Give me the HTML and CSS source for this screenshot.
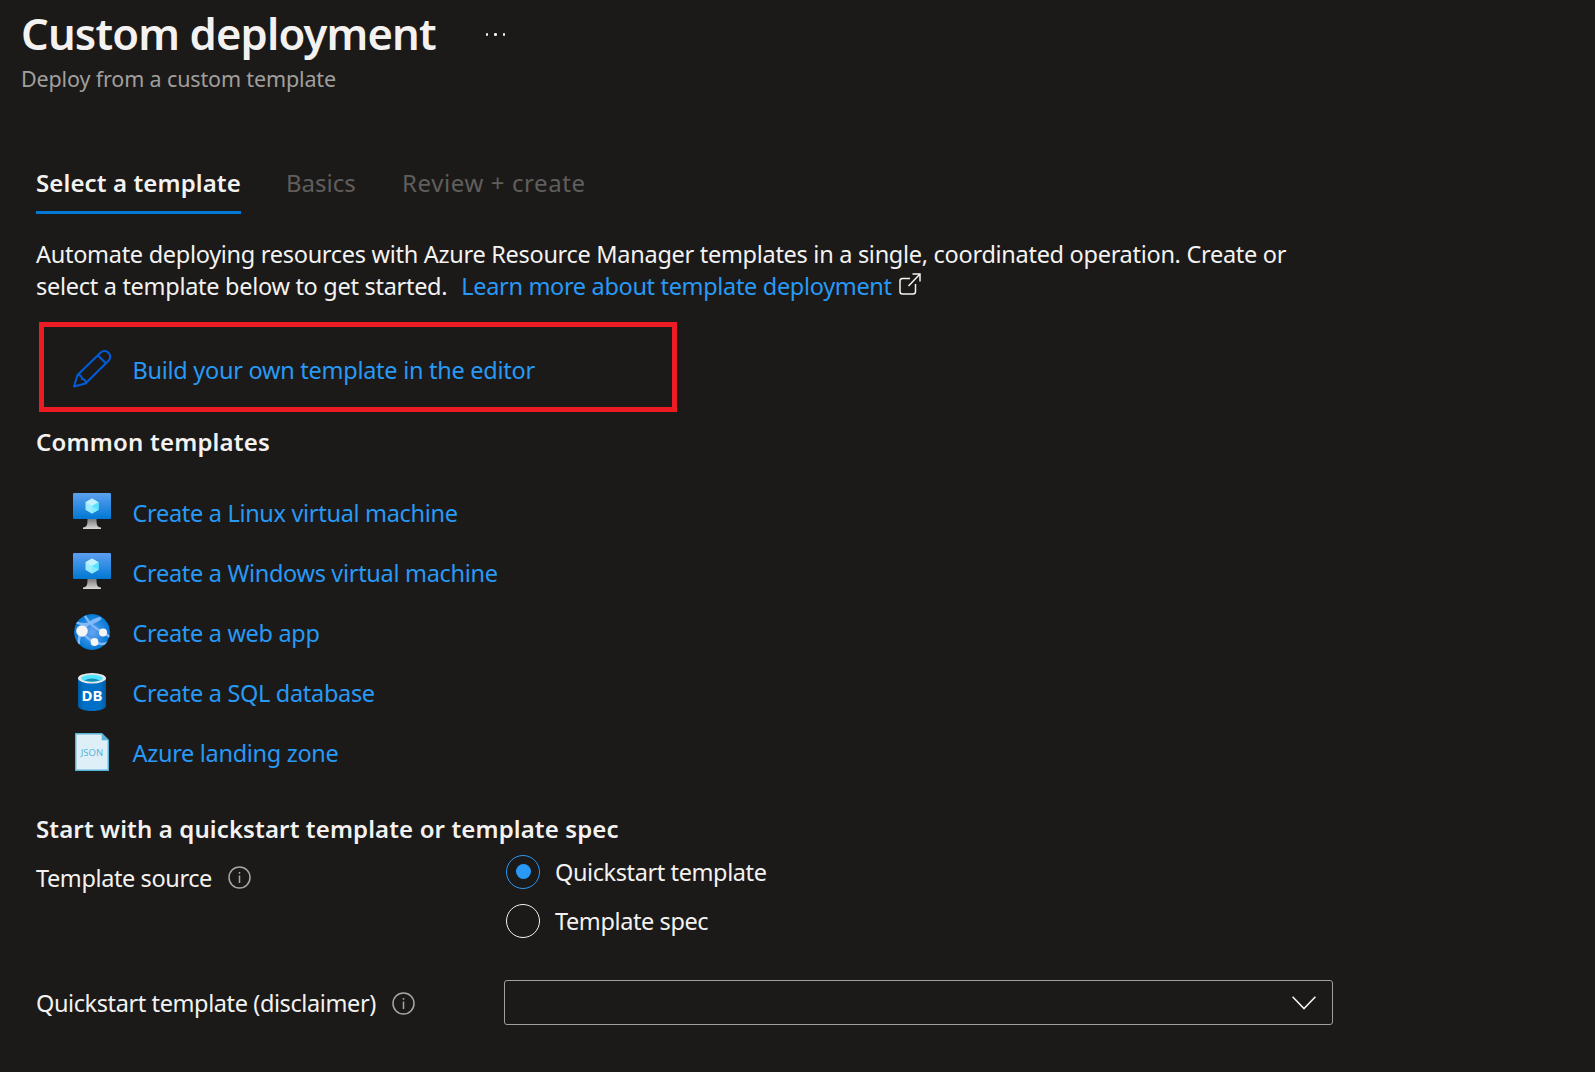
FILE: index.html
```html
<!DOCTYPE html>
<html lang="en">
<head>
<meta charset="utf-8">
<title>Custom deployment</title>
<link rel="stylesheet" href="styles.css">
</head>
<body>
<svg class="defs" aria-hidden="true">
  <defs>
    <linearGradient id="screen" x1="0" y1="0" x2="0" y2="1"><stop offset="0" stop-color="#5ea0ef"/><stop offset="1" stop-color="#0078d4"/></linearGradient>
    <linearGradient id="stand" x1="0" y1="0" x2="0" y2="1"><stop offset="0" stop-color="#7a7a7a"/><stop offset="1" stop-color="#d8d8d8"/></linearGradient>
    <radialGradient id="globe"><stop offset="0.1" stop-color="#5ea0ef"/><stop offset="1" stop-color="#0078d4"/></radialGradient>
    <linearGradient id="drum" x1="0" y1="0" x2="1" y2="0"><stop offset="0" stop-color="#005ba1"/><stop offset="0.2" stop-color="#0070c6"/><stop offset="0.8" stop-color="#0070c6"/><stop offset="1" stop-color="#005ba1"/></linearGradient>
    <clipPath id="globe-clip"><circle cx="19" cy="19" r="18"/></clipPath>
    <symbol id="vm" viewBox="0 0 38 38">
      <path d="M14.500 26h9c0 6 .5 8 4.500 8.500v1.500h-18v-1.500c4-.5 4.500-2.500 4.500-8.500z" fill="url(#stand)"/>
      <rect width="38" height="26" rx="1.200" fill="url(#screen)"/>
      <path d="M19 5.500l6.500 3.700v7.500L19 20.500l-6.500-3.800V9.200z" fill="#9cebff"/>
      <path d="M19 5.500l6.500 3.700L19 13l-6.500-3.800z" fill="#c3f1ff"/>
      <path d="M19 13l6.500-3.800v7.500L19 20.500z" fill="#50e6ff"/>
      <path d="M12.500 16.700L19 13l6.500 3.700-6.500 3.800z" fill="#9cebff" opacity=".7"/>
    </symbol>
  </defs>
</svg>

<header class="header">
  <div class="title-row">
    <h1 class="title">Custom deployment</h1>
    <span class="more"><i></i><i></i><i></i></span>
  </div>
  <p class="subtitle">Deploy from a custom template</p>
</header>

<main class="content">
  <nav class="tabs">
    <span class="tab tab-active">Select a template</span>
    <span class="tab tab-basics">Basics</span>
    <span class="tab tab-review">Review + create</span>
  </nav>

  <p class="intro">Automate deploying resources with Azure Resource Manager templates in a single, coordinated operation. Create or<br>select a template below to get started.<a class="learn">Learn more about template deployment</a><svg class="external" viewBox="0 0 22 22" fill="none" stroke="#f3f2f1" stroke-width="1.500"><path d="M11 5.500H3.500Q1 5.500 1 8v10.500Q1 21 3.500 21H14q2.500 0 2.500-2.500V11M13.500 1H21v7.500M21 1L9.500 13"/></svg></p>

  <div class="build">
    <svg class="pencil" viewBox="0 0 38 38" fill="none" stroke="#015cda" stroke-width="2" stroke-linejoin="round"><path d="M1 36.500l3.500-11.500L27.500 2.700a5.600 5.600 0 0 1 8 8L12.500 33.500zM24.800 5.300l8 8M4.500 25c2.500-.3 4.200 1 4.500 4 2.500.2 4 1.500 3.500 4.500"/></svg>
    <a class="link build-link">Build your own template in the editor</a>
  </div>

  <h2 class="section common">Common templates</h2>
  <ul class="templates">
    <li><svg class="icon" viewBox="0 0 38 38"><use href="#vm"/></svg><a class="link">Create a Linux virtual machine</a></li>
    <li><svg class="icon" viewBox="0 0 38 38"><use href="#vm"/></svg><a class="link">Create a Windows virtual machine</a></li>
    <li><svg class="icon" viewBox="0 0 38 38"><g clip-path="url(#globe-clip)"><circle cx="19" cy="19" r="18" fill="url(#globe)"/><g fill="none" stroke="#83b9f9" stroke-width="2.400"><path d="M9 18Q14 9 27 5M9 18Q13 26 22 29Q29 33 36 29M9 18Q5 24 6 31M12 3Q18 14 30 19L37 24M2 9Q15 15 28 5"/></g></g><circle cx="9" cy="18" r="5.800" fill="#f5f5f5"/><circle cx="30" cy="19.500" r="4" fill="#f5f5f5"/><circle cx="21.500" cy="29" r="3.900" fill="#f5f5f5"/></svg><a class="link">Create a web app</a></li>
    <li><svg class="icon" viewBox="0 0 38 38"><path d="M5 5v28c0 2.800 6.300 5 14 5s14-2.200 14-5V5z" fill="url(#drum)"/><ellipse cx="19" cy="5.200" rx="14" ry="5.200" fill="#e8e8e8"/><ellipse cx="19" cy="5.200" rx="11" ry="3.500" fill="#50e6ff"/><path d="M11 7.500q8-4 16 0-8 2.300-16 0z" fill="#198ab3"/><text x="19" y="28" class="db">DB</text></svg><a class="link">Create a SQL database</a></li>
    <li><svg class="icon" viewBox="0 0 38 38"><path d="M2.700.7h26l6.600 6.600v30H2.700z" fill="#deeff7" stroke="#59b4d9" stroke-width="1.400"/><path d="M28.700 0v7.300H36z" fill="#59b4d9"/><text x="19" y="22.500" class="json">JSON</text></svg><a class="link">Azure landing zone</a></li>
  </ul>

  <h2 class="section start">Start with a quickstart template or template spec</h2>
  <div class="field source">
    <div class="label"><span>Template source</span><svg class="info" viewBox="0 0 23 23"><circle cx="11.500" cy="11.500" r="10.500" fill="none" stroke="#a8a6a4" stroke-width="1.500"/><path d="M11.500 9.500V17M11.500 6v1.800" stroke="#a8a6a4" stroke-width="1.500"/></svg></div>
    <div class="radios">
      <label class="radio checked"><span class="ring"></span><span>Quickstart template</span></label>
      <label class="radio"><span class="ring"></span><span>Template spec</span></label>
    </div>
  </div>
  <div class="field quick">
    <div class="label"><span>Quickstart template (disclaimer)</span><svg class="info" viewBox="0 0 23 23"><circle cx="11.500" cy="11.500" r="10.500" fill="none" stroke="#a8a6a4" stroke-width="1.500"/><path d="M11.500 9.500V17M11.500 6v1.800" stroke="#a8a6a4" stroke-width="1.500"/></svg></div>
    <div class="select"><svg class="chevron" viewBox="0 0 24 14" fill="none" stroke="#f3f2f1" stroke-width="1.600"><path d="M.6.8L12 12.500 23.400.8"/></svg></div>
  </div>
</main>
</body>
</html>
```
FILE: styles.css
```css
* { box-sizing: border-box; }
body { margin: 0; height: 1072px; background: #1b1a19; color: #f3f2f1; font: 23.5px/32px "Noto Sans", "Open Sans", sans-serif; overflow: hidden; }
h1, h2, p, ul { margin: 0; padding: 0; }
ul { list-style: none; }
.defs { display: block; width: 0; height: 0; }
.header { padding: 3px 21px 0; height: 167px; }
.title-row { display: flex; align-items: center; gap: 50px; height: 60px; }
.title { font-size: 43.5px; line-height: 60px; font-weight: 600; letter-spacing: -0.85px; white-space: nowrap; }
.more { display: flex; gap: 6px; padding-top: 3px; }
.more i { width: 2.5px; height: 2.5px; background: #f3f2f1; border-radius: 50%; }
.subtitle { font-size: 21.5px; line-height: 31px; letter-spacing: -0.14px; color: #a19f9d; white-space: nowrap; }
.content { padding-left: 36px; }
.tabs { display: flex; height: 47px; font-size: 24px; white-space: nowrap; }
.tab { color: #605e5c; }
.tab-active { width: 205px; margin-right: 45px; color: #f3f2f1; font-weight: 600; letter-spacing: 0.12px; border-bottom: 3px solid #0078d4; }
.tab-basics { width: 116px; }
.tab-review { letter-spacing: 0.6px; }
.intro { margin-top: 24px; height: 64px; letter-spacing: -0.29px; white-space: nowrap; }
.learn { color: #2899f5; margin-left: 14px; letter-spacing: -0.33px; }
.external { width: 22px; height: 22px; margin-left: 7px; vertical-align: baseline; }
.link { color: #2899f5; letter-spacing: -0.31px; white-space: nowrap; }
.build { display: flex; width: 638px; height: 90px; margin: 20px 0 0 3px; padding: 23px 0 0 29px; border: 5px solid #ed1c24; gap: 21.5px; }
.pencil { width: 38px; height: 38px; }
.build-link { margin-top: 4px; letter-spacing: -0.27px; }
.section { font-size: 24px; line-height: 32px; font-weight: 600; letter-spacing: 0.12px; white-space: nowrap; }
.common { margin-top: 14px; letter-spacing: 0.2px; }
.templates { margin-top: 24px; }
.templates li { display: flex; align-items: center; gap: 21.5px; height: 60px; padding-left: 37px; }
.templates .link { padding-top: 2px; }
.icon { width: 38px; height: 38px; }
.db { font: 700 15px "Noto Sans", sans-serif; fill: #fff; text-anchor: middle; }
.json { font: 9.5px "Noto Sans", sans-serif; fill: #59b4d9; text-anchor: middle; }
.start { margin-top: 31px; }
.field { display: flex; letter-spacing: -0.4px; }
.label { display: flex; align-items: center; width: 468px; height: 32px; gap: 16.5px; white-space: nowrap; }
.info { width: 23px; height: 23px; }
.source { margin-top: 9px; height: 126px; }
.source .label { margin-top: 7.5px; }
.radio { display: flex; align-items: center; gap: 15px; height: 49px; margin-left: 2px; margin-top: -7px; }
.radio + .radio { margin-top: 0; }
.ring { width: 34px; height: 34px; border: 1.5px solid #f3f2f1; border-radius: 50%; display: grid; place-items: center; }
.checked .ring { border-color: #2899f5; }
.checked .ring::after { content: ""; width: 15px; height: 15px; border-radius: 50%; background: #2899f5; }
.quick .label { margin-top: 7px; }
.select { display: flex; align-items: center; justify-content: flex-end; width: 829px; height: 45px; padding-right: 16px; border: 1px solid #a19f9d; border-radius: 3px; }
.chevron { width: 24px; height: 14px; }
```
